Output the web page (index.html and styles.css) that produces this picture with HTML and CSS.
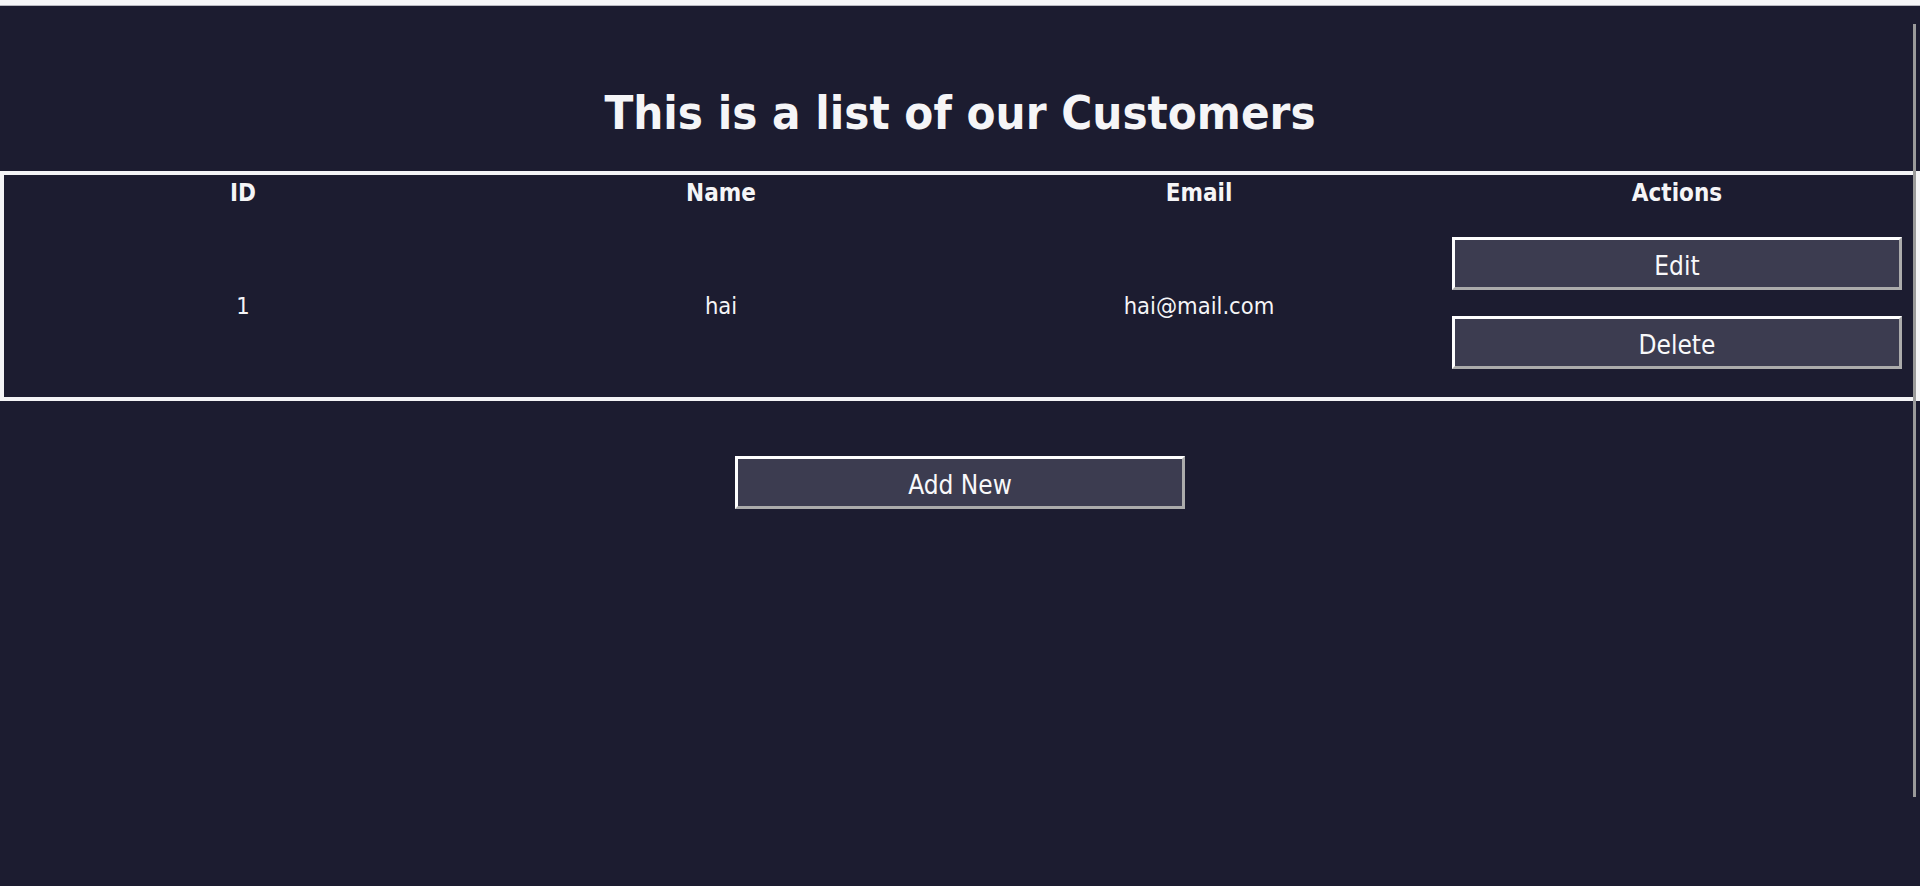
FILE: index.html
```html
<!DOCTYPE html>
<html lang="en">
<head>
<meta charset="utf-8">
<title>Customers</title>
<link rel="stylesheet" href="styles.css">
</head>
<body>
<div class="topbar"></div>
<main class="page">
  <h1 class="title">This is a list of our Customers</h1>
  <table class="customers">
    <thead>
      <tr>
        <th>ID</th>
        <th>Name</th>
        <th>Email</th>
        <th>Actions</th>
      </tr>
    </thead>
    <tbody>
      <tr>
        <td class="text-cell">1</td>
        <td class="text-cell">hai</td>
        <td class="text-cell">hai@mail.com</td>
        <td class="actions-cell">
          <div class="actions">
            <button class="btn" type="button">Edit</button>
            <button class="btn" type="button">Delete</button>
          </div>
        </td>
      </tr>
    </tbody>
  </table>
  <div class="add-row">
    <button class="btn btn-add" type="button">Add New</button>
  </div>
</main>
<div class="scroll-line"></div>
</body>
</html>
```

FILE: styles.css
```css
html, body {
  margin: 0;
  padding: 0;
}

body {
  background: #1c1c30;
  color: #f5f5f7;
  font-family: "DejaVu Sans Condensed", "DejaVu Sans", sans-serif;
  font-stretch: condensed;
  min-height: 886px;
  overflow: hidden;
}

.topbar {
  height: 5px;
  background: #f6f6f8;
  border-bottom: 1px solid #b8b8c0;
}

.page {
  display: flex;
  flex-direction: column;
}

.title {
  margin: 78px 0 29px;
  font-size: 47px;
  line-height: 58px;
  font-weight: bold;
  text-align: center;
}

.customers {
  width: 100%;
  table-layout: fixed;
  border-collapse: separate;
  border-spacing: 0;
  border: 4px solid #f4f4f6;
  font-size: 24px;
}

.customers th {
  font-weight: bold;
  line-height: 29px;
  padding: 4px 14px 6px;
  text-align: center;
}

.customers td {
  line-height: 29px;
  text-align: center;
  vertical-align: middle;
}

.customers .text-cell {
  font-size: 23.5px;
  padding: 29px 14px 28px;
}

.customers .actions-cell {
  padding: 23px 14px 28px;
}

.actions {
  display: flex;
  flex-direction: column;
  gap: 26px;
}

.btn {
  display: block;
  width: 100%;
  height: 53px;
  box-sizing: border-box;
  margin: 0;
  padding: 5px 0 0;
  background: #3c3c50;
  color: #f8f8fa;
  font-family: inherit;
  font-stretch: condensed;
  font-size: 26px;
  line-height: 29px;
  border: 3px solid;
  border-color: #ffffff #ababab #ababab #ffffff;
  text-align: center;
}

.add-row {
  display: flex;
  justify-content: center;
  margin-top: 55px;
}

.btn-add {
  width: 450px;
}

.scroll-line {
  position: absolute;
  left: 1913px;
  top: 24px;
  width: 3px;
  height: 773px;
  background: #9a9a9a;
}
```
